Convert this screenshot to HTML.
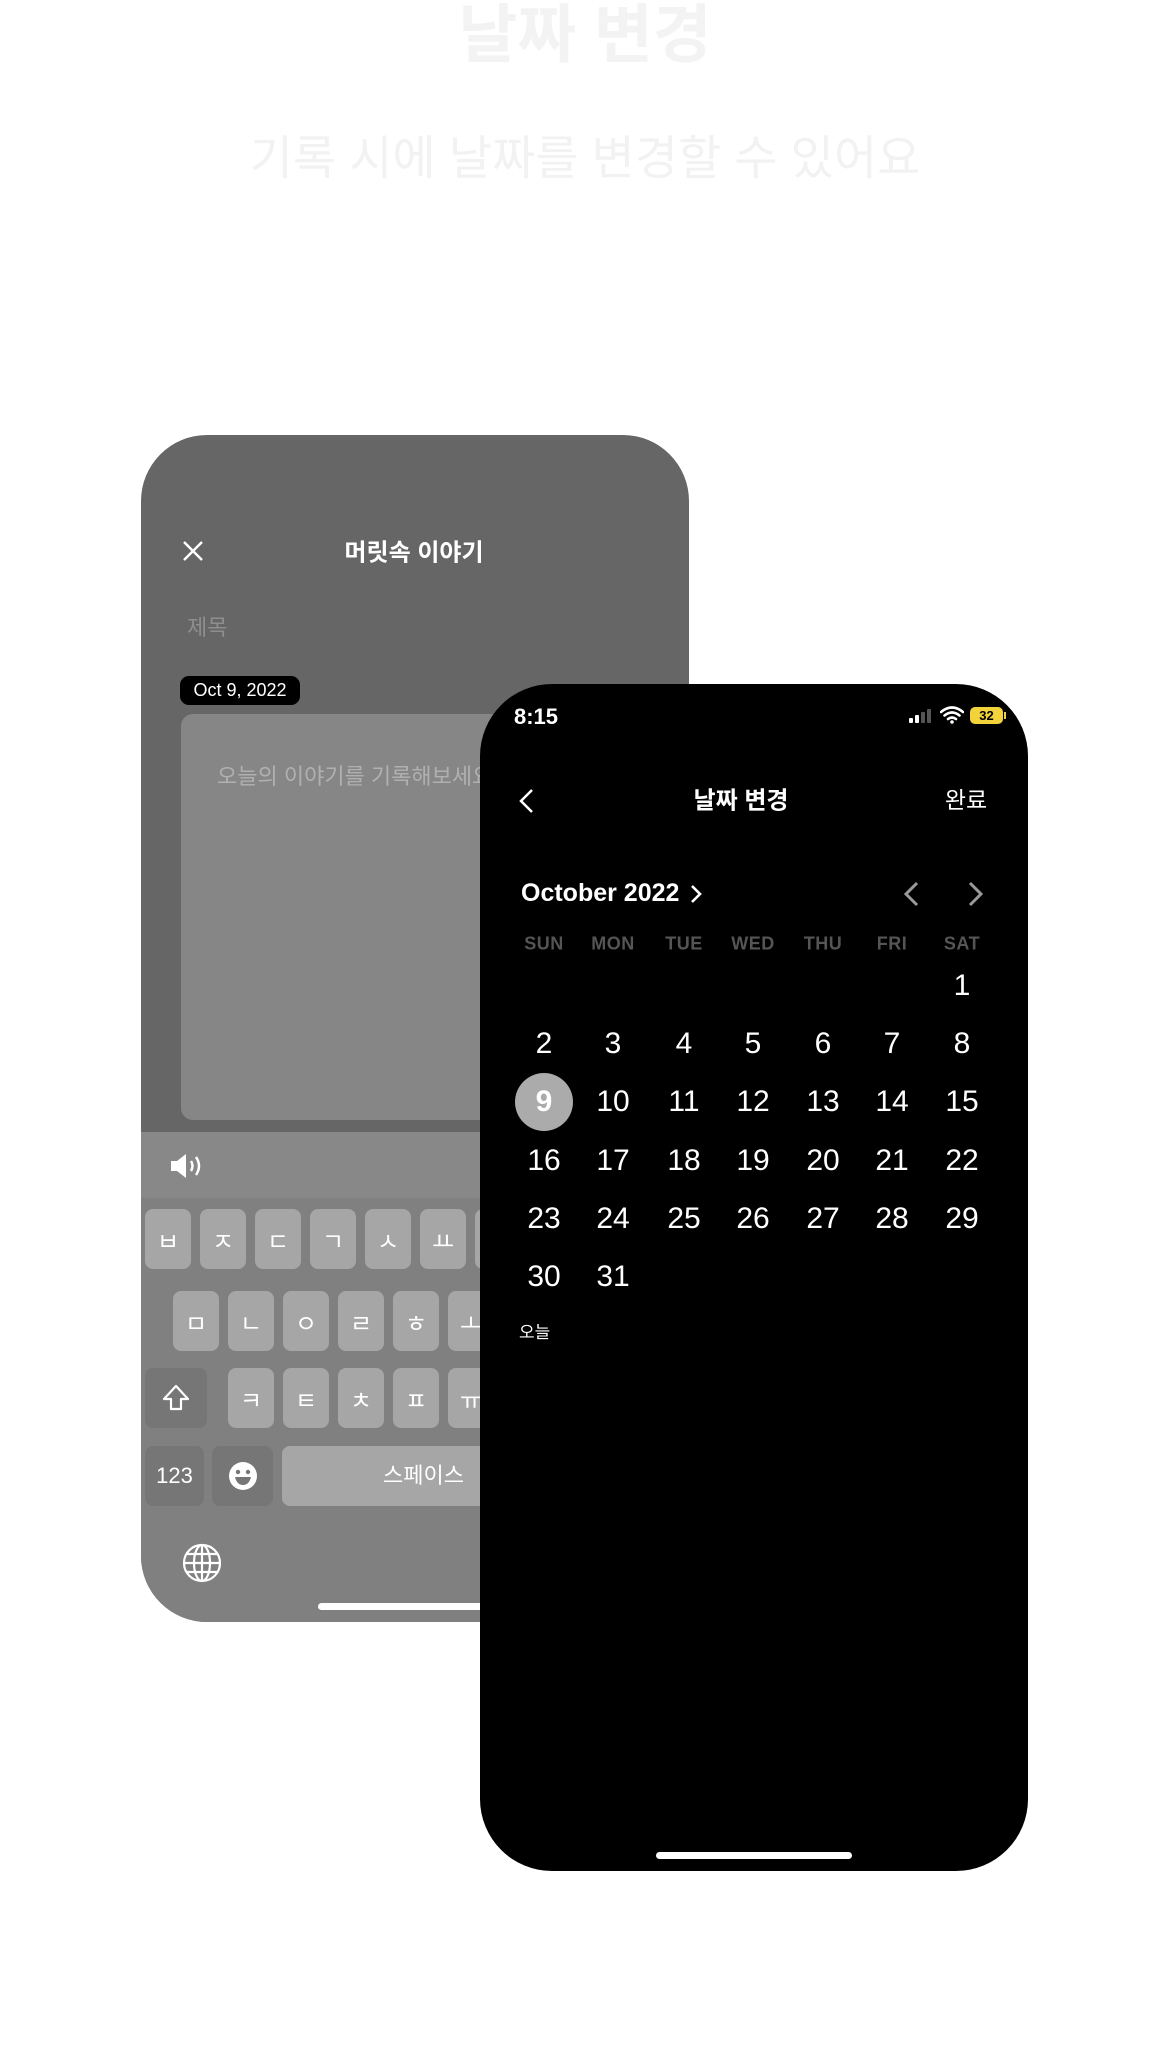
<!DOCTYPE html>
<html><head><meta charset="utf-8">
<style>
*{margin:0;padding:0;box-sizing:border-box}
body{width:1170px;height:2055px;background:#fff;position:relative;overflow:hidden;font-family:"Liberation Sans","Noto Sans CJK KR",sans-serif}
.a{position:absolute}
.c{transform:translate(-50%,-50%);white-space:nowrap}
.key{position:absolute;width:46px;height:60px;background:#a6a6a6;border-radius:8px;color:#fff;font-size:24px;display:flex;align-items:center;justify-content:center}
.dk{background:#767676}
.d{position:absolute;transform:translate(-50%,-50%);color:#fff;font-size:30px;white-space:nowrap}
.h{position:absolute;transform:translate(-50%,-50%);color:#555;font-size:18px;font-weight:bold;letter-spacing:.5px}
</style></head><body>
<div class="a c" style="left:585px;top:30px;font-size:64px;font-weight:bold;color:#f3f3f3">날짜 변경</div>
<div class="a c" style="left:585px;top:154px;font-size:47px;color:#f2f2f2">기록 시에 날짜를 변경할 수 있어요</div>

<!-- back phone -->
<div class="a" style="left:141px;top:435px;width:548px;height:1187px;background:#666;border-radius:66px;overflow:hidden">
  <svg class="a" style="left:40px;top:104px" width="24" height="24" viewBox="0 0 24 24"><path d="M3 3L21 21M21 3L3 21" stroke="#fff" stroke-width="2.4"/></svg>
  <div class="a c" style="left:273px;top:115px;color:#fff;font-weight:bold;font-size:24px">머릿속 이야기</div>
  <div class="a" style="left:46px;top:175px;color:#8e8e8e;font-size:22px">제목</div>
  <div class="a" style="left:39px;top:241px;width:120px;height:29px;background:#000;border-radius:9px;color:#fff;font-size:18px;line-height:29px;text-align:center">Oct 9, 2022</div>
  <div class="a" style="left:40px;top:279px;width:480px;height:406px;background:#868686;border-radius:12px"></div>
  <div class="a" style="left:76px;top:324px;color:#b0b0b0;font-size:22px">오늘의 이야기를 기록해보세요</div>
  <div class="a" style="left:0;top:697px;width:548px;height:66px;background:#888"></div>
  <svg class="a" style="left:28px;top:717px" width="40" height="28" viewBox="0 0 40 28"><path d="M2 9h6l9-7v24l-9-7H2z" fill="#fff"/><path d="M22 9q3 5 0 10M27 5q6 9 0 18" stroke="#fff" stroke-width="2.5" fill="none"/></svg>
  <div class="a" style="left:0;top:763px;width:548px;height:424px;background:#808080"></div>
  <div class="key" style="left:4px;top:774px">ㅂ</div><div class="key" style="left:59px;top:774px">ㅈ</div><div class="key" style="left:114px;top:774px">ㄷ</div><div class="key" style="left:169px;top:774px">ㄱ</div><div class="key" style="left:224px;top:774px">ㅅ</div><div class="key" style="left:279px;top:774px">ㅛ</div><div class="key" style="left:334px;top:774px">ㅕ</div>
  <div class="key" style="left:32px;top:856px">ㅁ</div><div class="key" style="left:87px;top:856px">ㄴ</div><div class="key" style="left:142px;top:856px">ㅇ</div><div class="key" style="left:197px;top:856px">ㄹ</div><div class="key" style="left:252px;top:856px">ㅎ</div><div class="key" style="left:307px;top:856px">ㅗ</div>
  <div class="key dk" style="left:4px;top:933px;width:62px"><svg width="30" height="28" viewBox="0 0 30 28"><path d="M15 2L3 15h7v10h10V15h7z" fill="none" stroke="#fff" stroke-width="2.2" stroke-linejoin="round"/></svg></div>
  <div class="key" style="left:87px;top:933px">ㅋ</div><div class="key" style="left:142px;top:933px">ㅌ</div><div class="key" style="left:197px;top:933px">ㅊ</div><div class="key" style="left:252px;top:933px">ㅍ</div><div class="key" style="left:307px;top:933px">ㅠ</div>
  <div class="key dk" style="left:4px;top:1011px;width:59px;font-size:22px">123</div>
  <div class="key dk" style="left:71px;top:1011px;width:61px"><svg width="30" height="30" viewBox="0 0 30 30"><circle cx="15" cy="15" r="14" fill="#fff"/><circle cx="10" cy="11" r="2.2" fill="#767676"/><circle cx="20" cy="11" r="2.2" fill="#767676"/><path d="M7 16h16q-2 8-8 8t-8-8z" fill="#767676"/></svg></div>
  <div class="key" style="left:141px;top:1011px;width:380px;font-size:22px;justify-content:flex-start;padding-left:101px;align-items:flex-start;padding-top:12px">스페이스</div>
  <svg class="a" style="left:41px;top:1108px" width="40" height="40" viewBox="0 0 40 40" fill="none" stroke="#fff" stroke-width="2.2"><circle cx="20" cy="20" r="18"/><ellipse cx="20" cy="20" rx="8" ry="18"/><path d="M20 2v36M2 20h36M5 11h30M5 29h30"/></svg>
  <div class="a" style="left:177px;top:1168px;width:300px;height:7px;background:#fff;border-radius:4px"></div>
</div>

<!-- front phone -->
<div class="a" style="left:480px;top:684px;width:548px;height:1187px;background:#000;border-radius:72px;overflow:hidden">
  <div class="a" style="left:34px;top:20px;color:#fff;font-weight:bold;font-size:22px">8:15</div>
  <svg class="a" style="left:427px;top:24px" width="30" height="16" viewBox="0 0 30 16"><rect x="2" y="10" width="4" height="5" rx="1" fill="#fff"/><rect x="8" y="7" width="4" height="8" rx="1" fill="#fff"/><rect x="14" y="4" width="4" height="11" rx="1" fill="#555"/><rect x="20" y="1" width="4" height="14" rx="1" fill="#555"/></svg>
  <svg class="a" style="left:460px;top:22px" width="24" height="18" viewBox="0 0 24 18"><path d="M1 6q11-9 22 0M4.5 9.5q7.5-6 15 0M8 13q4-3 8 0" stroke="#fff" stroke-width="2.6" fill="none" stroke-linecap="round"/><circle cx="12" cy="16" r="1.8" fill="#fff"/></svg>
  <div class="a" style="left:490px;top:23px;width:33px;height:17px;background:#f3d33b;border-radius:5px;color:#000;font-size:13px;font-weight:bold;text-align:center;line-height:17px">32</div>
  <div class="a" style="left:524px;top:28px;width:2px;height:7px;background:#f3d33b"></div>
  <svg class="a" style="left:38px;top:104px" width="18" height="26" viewBox="0 0 18 26"><path d="M14 2L3 13l11 11" stroke="#fff" stroke-width="2.5" fill="none"/></svg>
  <div class="a c" style="left:261px;top:114px;color:#fff;font-weight:bold;font-size:24px">날짜 변경</div>
  <div class="a c" style="left:486px;top:114px;color:#fff;font-size:23px">완료</div>
  <div class="a" style="left:41px;top:195px;color:#fff;font-weight:bold;font-size:25px">October 2022</div>
  <svg class="a" style="left:209px;top:199px" width="14" height="22" viewBox="0 0 14 22"><path d="M3 3l8 8-8 8" stroke="#fff" stroke-width="2.6" fill="none"/></svg>
  <svg class="a" style="left:421px;top:196px" width="20" height="28" viewBox="0 0 20 28"><path d="M16 3L5 14l11 11" stroke="#999" stroke-width="3" fill="none"/></svg>
  <svg class="a" style="left:486px;top:196px" width="20" height="28" viewBox="0 0 20 28"><path d="M4 3l11 11-11 11" stroke="#999" stroke-width="3" fill="none"/></svg>
  <div class="h" style="left:64px;top:260px">SUN</div><div class="h" style="left:133px;top:260px">MON</div><div class="h" style="left:204px;top:260px">TUE</div><div class="h" style="left:273px;top:260px">WED</div><div class="h" style="left:343px;top:260px">THU</div><div class="h" style="left:412px;top:260px">FRI</div><div class="h" style="left:482px;top:260px">SAT</div>
  <div class="a" style="left:35px;top:389px;width:58px;height:58px;border-radius:50%;background:#ababab"></div>
  <div class="d" style="left:482px;top:302px">1</div>
  <div class="d" style="left:64px;top:360px">2</div><div class="d" style="left:133px;top:360px">3</div><div class="d" style="left:204px;top:360px">4</div><div class="d" style="left:273px;top:360px">5</div><div class="d" style="left:343px;top:360px">6</div><div class="d" style="left:412px;top:360px">7</div><div class="d" style="left:482px;top:360px">8</div>
  <div class="d" style="left:64px;top:418px;font-weight:bold">9</div><div class="d" style="left:133px;top:418px">10</div><div class="d" style="left:204px;top:418px">11</div><div class="d" style="left:273px;top:418px">12</div><div class="d" style="left:343px;top:418px">13</div><div class="d" style="left:412px;top:418px">14</div><div class="d" style="left:482px;top:418px">15</div>
  <div class="d" style="left:64px;top:477px">16</div><div class="d" style="left:133px;top:477px">17</div><div class="d" style="left:204px;top:477px">18</div><div class="d" style="left:273px;top:477px">19</div><div class="d" style="left:343px;top:477px">20</div><div class="d" style="left:412px;top:477px">21</div><div class="d" style="left:482px;top:477px">22</div>
  <div class="d" style="left:64px;top:535px">23</div><div class="d" style="left:133px;top:535px">24</div><div class="d" style="left:204px;top:535px">25</div><div class="d" style="left:273px;top:535px">26</div><div class="d" style="left:343px;top:535px">27</div><div class="d" style="left:412px;top:535px">28</div><div class="d" style="left:482px;top:535px">29</div>
  <div class="d" style="left:64px;top:593px">30</div><div class="d" style="left:133px;top:593px">31</div>
  <div class="a" style="left:39px;top:634px;color:#fff;font-size:17px">오늘</div>
  <div class="a" style="left:176px;top:1168px;width:196px;height:7px;background:#fff;border-radius:4px"></div>
</div>
</body></html>
